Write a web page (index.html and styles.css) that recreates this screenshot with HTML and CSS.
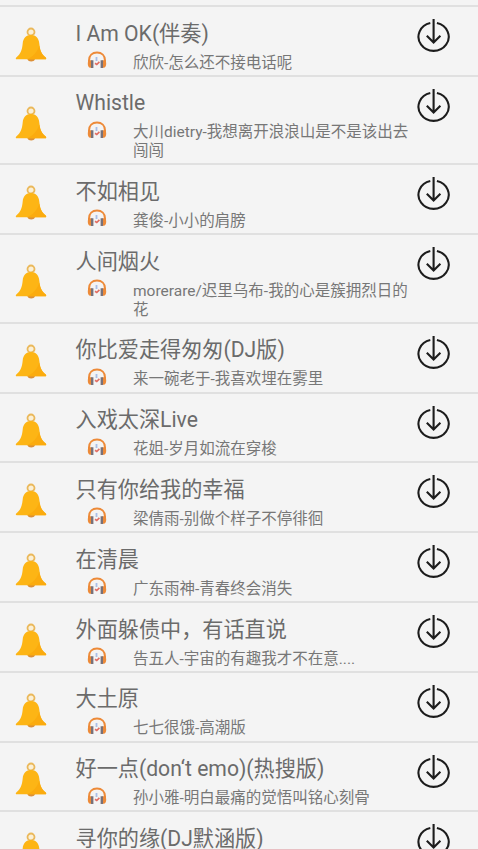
FILE: index.html
```html
<!DOCTYPE html>
<html lang="zh-CN">
<head>
<meta charset="utf-8">
<title>铃声</title>
<link rel="stylesheet" href="styles.css">
</head>
<body>
<svg class="sprite" width="0" height="0" aria-hidden="true">
  <symbol id="bell" viewBox="0 0 32 36">
    <path d="M12.500 32h7.500c-.5 1.800-2 2.500-3.800 2.500s-3.200-.7-3.700-2.500z" fill="#dd8f35"/>
    <circle cx="16" cy="5" r="3.500" fill="#fbf0d6" stroke="#eab85a" stroke-width="1.800"/>
    <path d="M16 8c-5 0-7.800 3.200-8.300 8.500C7 23.500 5.500 27 1.500 30.200c-1.100.9-.9 2.100.4 2.100h28.200c1.300 0 1.500-1.200.4-2.100-4-3.200-5.500-6.700-6.200-13.700C23.800 11.200 21 8 16 8z" fill="#fdb515"/>
    <path d="M24.300 18.500c.8 6 2.600 9 6.200 11.700 1.100.9.900 2.100-.4 2.100H12C18 29.500 22.500 25 24.300 18.500z" fill="#fbab0e"/>
  </symbol>
  <symbol id="phones" viewBox="0 0 20 18">
    <path d="M2 12V9.500C2 4.700 5.300 1.600 10 1.600s8 3.100 8 7.900V12" fill="none" stroke="#ed8a38" stroke-width="2"/>
    <path d="M4.500 9.200H3C1.400 9.200.8 10.500.8 12.500s.6 4.200 2.200 4.200h1.500zM15.500 9.200H17c1.600 0 2.200 1.300 2.200 3.300s-.6 4.200-2.200 4.200h-1.500z" fill="#ed8a38"/>
    <path d="M4 9.200h2.400v7.700H4zM13.600 9.200H16v7.700h-2.400z" fill="#77717a"/>
    <path d="M9.500 6v4" stroke="#a9bfe8" stroke-width="1.800"/>
    <path d="M8 12.200l1.800 1.300 2.600-2.600" fill="none" stroke="#e26e62" stroke-width="1.700"/>
  </symbol>
  <symbol id="download" viewBox="0 0 34 34">
    <path d="M13.300 5A15.100 14.100 0 1 0 19.900 5M16.600 1v23.500M9.800 17.800l6.800 6.700 6.800-6.700" fill="none" stroke="#1c1c1c" stroke-width="2.100"/>
  </symbol>
</svg>
<main class="list">
  <article class="row"><svg class="bell"><use href="#bell"/></svg><div class="info"><h2 class="title">I Am OK(伴奏)</h2><div class="meta"><svg class="phones"><use href="#phones"/></svg><p class="artist">欣欣-怎么还不接电话呢</p></div></div><svg class="download"><use href="#download"/></svg></article>
  <article class="row tall"><svg class="bell"><use href="#bell"/></svg><div class="info"><h2 class="title">Whistle</h2><div class="meta"><svg class="phones"><use href="#phones"/></svg><p class="artist">大川dietry-我想离开浪浪山是不是该出去<br>闯闯</p></div></div><svg class="download"><use href="#download"/></svg></article>
  <article class="row"><svg class="bell"><use href="#bell"/></svg><div class="info"><h2 class="title">不如相见</h2><div class="meta"><svg class="phones"><use href="#phones"/></svg><p class="artist">龚俊-小小的肩膀</p></div></div><svg class="download"><use href="#download"/></svg></article>
  <article class="row tall"><svg class="bell"><use href="#bell"/></svg><div class="info"><h2 class="title">人间烟火</h2><div class="meta"><svg class="phones"><use href="#phones"/></svg><p class="artist">morerare/迟里乌布-我的心是簇拥烈日的<br>花</p></div></div><svg class="download"><use href="#download"/></svg></article>
  <article class="row"><svg class="bell"><use href="#bell"/></svg><div class="info"><h2 class="title">你比爱走得匆匆(DJ版)</h2><div class="meta"><svg class="phones"><use href="#phones"/></svg><p class="artist">来一碗老于-我喜欢埋在雾里</p></div></div><svg class="download"><use href="#download"/></svg></article>
  <article class="row"><svg class="bell"><use href="#bell"/></svg><div class="info"><h2 class="title">入戏太深Live</h2><div class="meta"><svg class="phones"><use href="#phones"/></svg><p class="artist">花姐-岁月如流在穿梭</p></div></div><svg class="download"><use href="#download"/></svg></article>
  <article class="row"><svg class="bell"><use href="#bell"/></svg><div class="info"><h2 class="title">只有你给我的幸福</h2><div class="meta"><svg class="phones"><use href="#phones"/></svg><p class="artist">梁倩雨-别做个样子不停徘徊</p></div></div><svg class="download"><use href="#download"/></svg></article>
  <article class="row"><svg class="bell"><use href="#bell"/></svg><div class="info"><h2 class="title">在清晨</h2><div class="meta"><svg class="phones"><use href="#phones"/></svg><p class="artist">广东雨神-青春终会消失</p></div></div><svg class="download"><use href="#download"/></svg></article>
  <article class="row"><svg class="bell"><use href="#bell"/></svg><div class="info"><h2 class="title">外面躲债中，有话直说</h2><div class="meta"><svg class="phones"><use href="#phones"/></svg><p class="artist">告五人-宇宙的有趣我才不在意....</p></div></div><svg class="download"><use href="#download"/></svg></article>
  <article class="row"><svg class="bell"><use href="#bell"/></svg><div class="info"><h2 class="title">大土原</h2><div class="meta"><svg class="phones"><use href="#phones"/></svg><p class="artist">七七很饿-高潮版</p></div></div><svg class="download"><use href="#download"/></svg></article>
  <article class="row"><svg class="bell"><use href="#bell"/></svg><div class="info"><h2 class="title">好一点(don‘t emo)(热搜版)</h2><div class="meta"><svg class="phones"><use href="#phones"/></svg><p class="artist">孙小雅-明白最痛的觉悟叫铭心刻骨</p></div></div><svg class="download"><use href="#download"/></svg></article>
  <article class="row"><svg class="bell"><use href="#bell"/></svg><div class="info"><h2 class="title">寻你的缘(DJ默涵版)</h2></div><svg class="download"><use href="#download"/></svg></article>
</main>
</body>
</html>
```
FILE: styles.css
```css
* { box-sizing: border-box; }
body { margin: 0; background: #f4f4f4; font-family: Roboto, "Noto Sans CJK SC", sans-serif; }
.sprite { display: none; }
.list { height: 850px; padding-top: 5px; overflow: hidden; border-bottom: 1px solid #e9bfc3; }
.row { display: flex; height: 69.8px; border-top: 2px solid #e0e0e0; padding: 0 27px 0 15px; }
.tall { height: 88.6px; }
.bell { width: 32px; height: 36px; flex: none; align-self: center; margin-top: 8px; }
.info { flex: 1; min-width: 0; padding: 11.6px 0 0 28.5px; }
.title { margin: 0; height: 30px; font-size: 21.15px; line-height: 30px; font-weight: 400; color: #6b6b6b; white-space: nowrap; }
.meta { display: flex; padding-left: 11px; }
.phones { width: 20px; height: 18px; flex: none; margin-top: 2.5px; }
.artist { margin: 5px 0 0 26.5px; font-size: 15.5px; line-height: 19px; color: #777; white-space: nowrap; }
.download { width: 34px; height: 34px; flex: none; margin-top: 11px; }
```
